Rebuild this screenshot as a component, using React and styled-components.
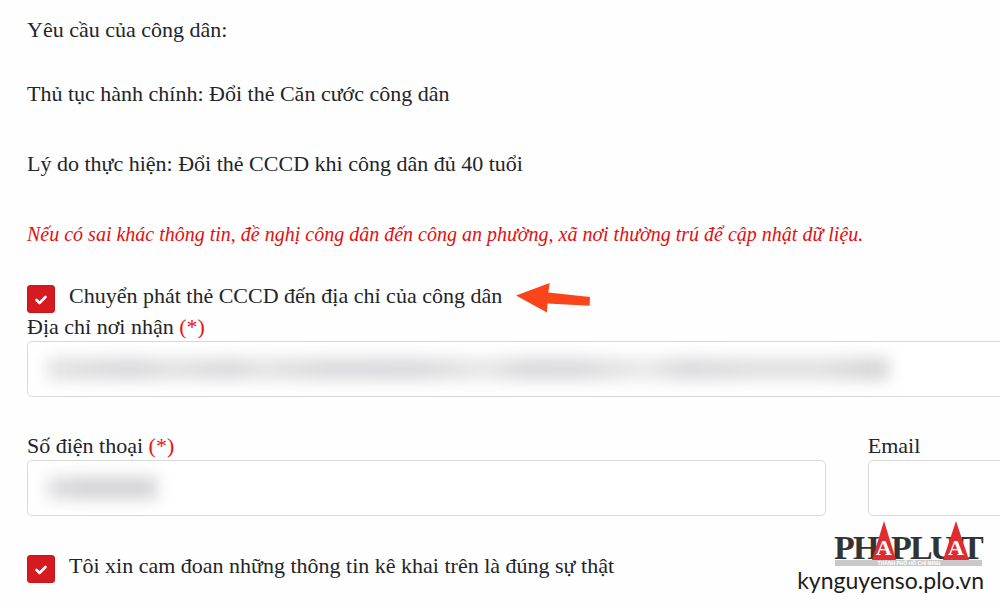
import React, { useState } from 'react'
import styled, { createGlobalStyle } from 'styled-components'

const ADDRESS_SHADES = 'linear-gradient(90deg, #e2e2e3, #d8d8db 10%, #e2e2e3 15%, #d9d9dc 22%, #e4e4e4 25%, #dadadc 33%, #d9d9dc 44%, #e8e8e8 52%, #d8d8db 57%, #d9d9dc 63%, #eaeaea 71%, #d9d9dc 76%, #e0e0e1 84%, #e0e0e1 92%, #d4d4d6 98%)'
const PHONE_SHADES = 'linear-gradient(90deg, #e0e0e2, #d2d2d6 30%, #d2d2d6 90%)'

const Checkbox = ({ id, children }) => {
  const [checked, setChecked] = useState(true)

  return (
    <CheckRow>
      <Tick id={id} type="checkbox" checked={checked} onChange={() => setChecked(!checked)} />
      <CheckLabel htmlFor={id}>{children}</CheckLabel>
    </CheckRow>
  )
}

const TextField = ({ id, label, type, required, hidden, shades }) => (
  <Field>
    <FieldLabel htmlFor={id}>
      {label} {required && <Required>(*)</Required>}
    </FieldLabel>
    <InputWrapper>
      <Input id={id} type={type || 'text'} />
      {hidden && <Redacted $width={hidden} $shades={shades} />}
    </InputWrapper>
  </Field>
)

const Arrow = () => (
  <svg width="74" height="30" viewBox="0 0 74 30" aria-hidden="true">
    <path d="M0 12.5 L33.7 0 L32.4 9.4 L74 14 L73.6 22.8 L31.4 20.6 L31 29.5 Z" fill="#f94519" />
  </svg>
)

const Logo = () => (
  <svg width="150" height="47" viewBox="0 0 150 47" aria-hidden="true">
    <rect x="1" y="40" width="147" height="6" fill="#c9c9c9" />
    <LogoLetters>
      <text x="0" y="39">P</text>
      <text x="19" y="39">H</text>
      <text x="57" y="39">P</text>
      <text x="76" y="39">L</text>
      <text x="96" y="39">U</text>
      <text x="127" y="39">T</text>
    </LogoLetters>
    <path d="M50 1 L62 40 H38 Z M122 1 L135 40 H109 Z" fill="#e02b31" />
    <LogoAccent>
      <text x="50" y="35">A</text>
      <text x="122" y="35">A</text>
    </LogoAccent>
    <LogoCaption x="75" y="45">THÀNH PHỐ HỒ CHÍ MINH</LogoCaption>
  </svg>
)

const App = () => (
  <>
    <GlobalStyle />
    <Page>
      <Heading>Yêu cầu của công dân:</Heading>
      <Procedure>Thủ tục hành chính: Đổi thẻ Căn cước công dân</Procedure>
      <Reason>Lý do thực hiện: Đổi thẻ CCCD khi công dân đủ 40 tuổi</Reason>
      <Notice>
        Nếu có sai khác thông tin, đề nghị công dân đến công an phường, xã nơi thường trú để cập nhật dữ liệu.
      </Notice>
      <Form>
        <Delivery>
          <DeliveryChoice>
            <Checkbox id="delivery">Chuyển phát thẻ CCCD đến địa chỉ của công dân</Checkbox>
            <Arrow />
          </DeliveryChoice>
          <TextField id="address" label="Địa chỉ nơi nhận" required hidden="842px" shades={ADDRESS_SHADES} />
        </Delivery>
        <Columns>
          <TextField id="phone" label="Số điện thoại" type="tel" required hidden="110px" shades={PHONE_SHADES} />
          <TextField id="email" label="Email" type="email" />
        </Columns>
        <Checkbox id="confirm">Tôi xin cam đoan những thông tin kê khai trên là đúng sự thật</Checkbox>
      </Form>
      <Watermark>
        <Logo />
        <Site>kynguyenso.plo.vn</Site>
      </Watermark>
    </Page>
  </>
)

const GlobalStyle = createGlobalStyle`
  * {
    box-sizing: border-box;
  }

  body {
    margin: 0;
    background: #fefefe;
    color: #212529;
    font-family: 'Liberation Serif', 'Times New Roman', serif;
    font-size: 22px;
    line-height: 28px;
  }
`

const Page = styled.main`
  position: relative;
  min-height: 100vh;
  padding: 16px 0 24px 27px;
  overflow: hidden;
`

const Heading = styled.h1`
  margin: 0 0 36px;
  font-size: 22px;
  font-weight: 400;
`

const Procedure = styled.p`
  margin: 0 0 42px;
`

const Reason = styled.p`
  margin: 0 0 42px;
`

const Notice = styled.p`
  margin: 0 0 33px;
  color: #e60d0d;
  font-size: 20px;
  font-style: italic;
`

/* the form runs past the right edge of the window */
const Form = styled.form`
  display: flex;
  flex-direction: column;
  gap: 35px;
  width: 168.5%;
`

const Delivery = styled.div`
  display: flex;
  flex-direction: column;
`

const DeliveryChoice = styled.div`
  display: flex;
  align-items: flex-end;
  gap: 14px;
`

const Columns = styled.div`
  display: grid;
  grid-template-columns: 1fr 1fr;
  gap: 42px;
`

const CheckRow = styled.div`
  display: flex;
  align-items: flex-start;
  gap: 14px;
`

const Tick = styled.input`
  appearance: none;
  flex: none;
  width: 28px;
  height: 28px;
  margin: 4px 0 0;
  border: 1px solid #c9161d;
  border-radius: 3px;
  background: #fff;

  &:checked {
    background: #d71920 url("data:image/svg+xml,%3Csvg xmlns='http://www.w3.org/2000/svg' viewBox='0 0 28 28'%3E%3Cpath d='M9.5 15l3 3 6-6' fill='none' stroke='white' stroke-width='2.6' stroke-linecap='round' stroke-linejoin='round'/%3E%3C/svg%3E") center / 28px no-repeat;
  }
`

const CheckLabel = styled.label`
  line-height: 30px;
`

const Field = styled.div`
  display: flex;
  flex-direction: column;
`

const FieldLabel = styled.label`
  display: block;
`

const Required = styled.span`
  color: #f20d0d;
`

const InputWrapper = styled.div`
  position: relative;
`

const Input = styled.input`
  display: block;
  width: 100%;
  height: 56px;
  padding: 0 18px;
  border: 1px solid #d9d9d9;
  border-radius: 5px;
  background: #fff;
  color: inherit;
  font: inherit;
`

const Redacted = styled.span`
  position: absolute;
  top: 17px;
  left: 20px;
  width: ${({ $width }) => $width};
  height: 22px;
  background: ${({ $shades }) => $shades};
  filter: blur(8px);
  pointer-events: none;
`

const Watermark = styled.div`
  position: absolute;
  right: 16px;
  bottom: 16px;
  display: flex;
  flex-direction: column;
  align-items: flex-end;
`

const LogoLetters = styled.g`
  fill: #333;
  font-size: 34px;
  font-weight: 700;
`

const LogoAccent = styled.g`
  fill: #fff;
  font-size: 22px;
  font-weight: 700;
  text-anchor: middle;
`

const LogoCaption = styled.text`
  fill: #fff;
  font-family: 'Liberation Sans', sans-serif;
  font-size: 5px;
  font-weight: 700;
  text-anchor: middle;
`

const Site = styled.span`
  color: #1c1c1c;
  font-family: Lato, sans-serif;
  font-size: 23px;
  line-height: 26px;
`

export default App
